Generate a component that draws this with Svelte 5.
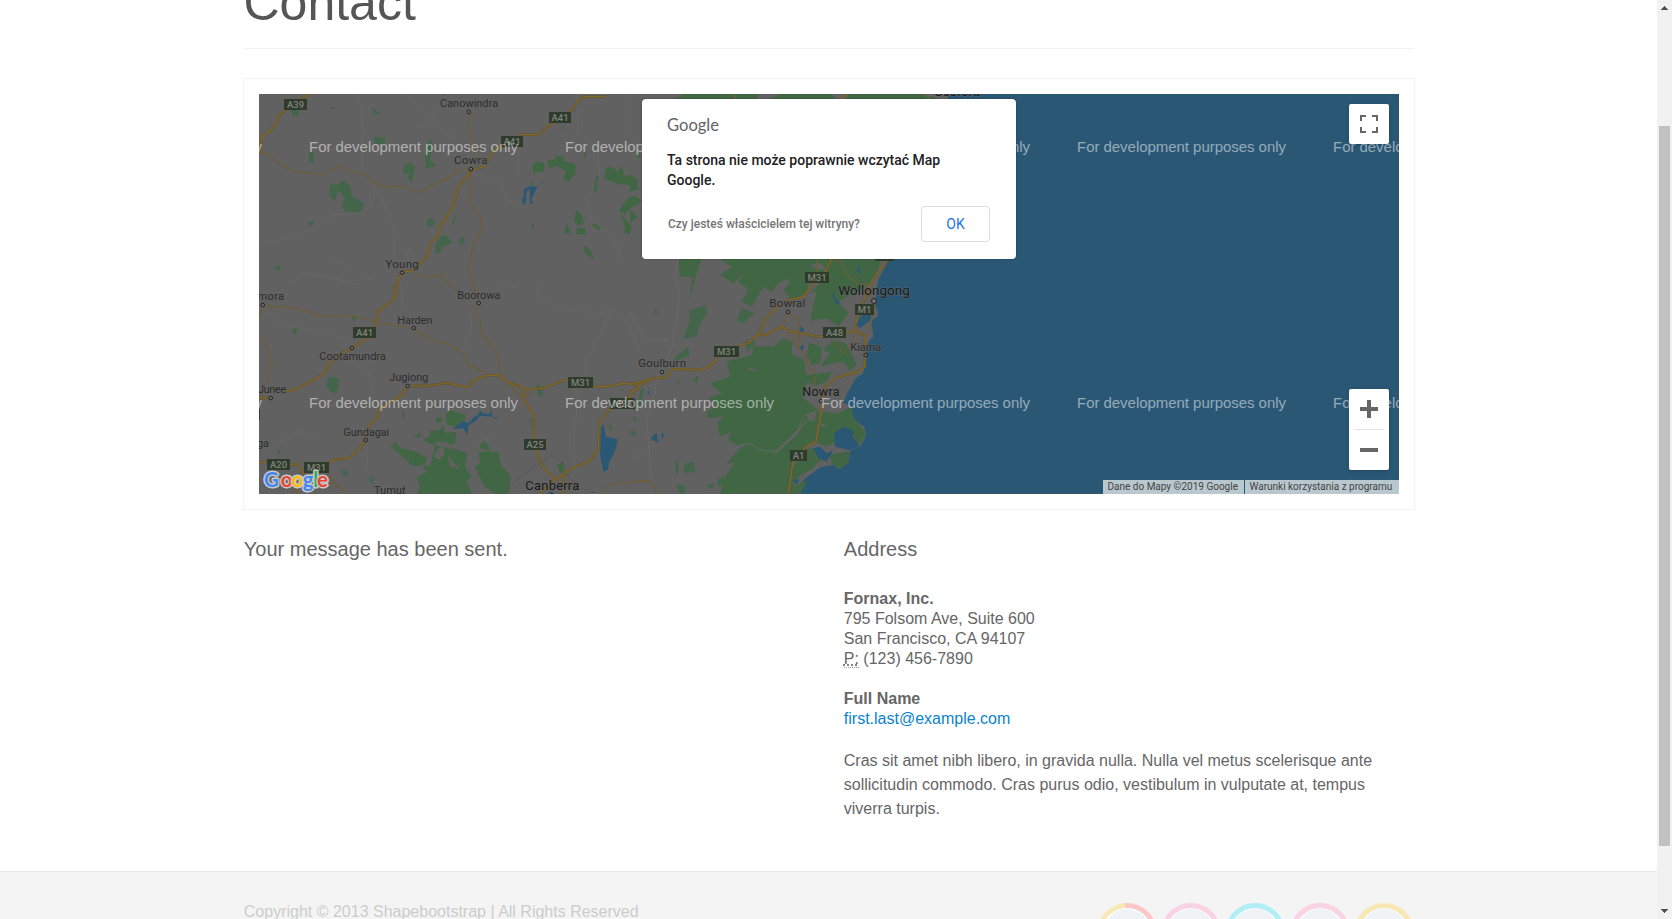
<script>
  // Town labels: text, left x, width, baseline, size, marker x, marker y
  const towns = [
    ['Canowindra', 181, 58, 13, 11, 209.7, 18],
    ['Cowra', 195, 33.5, 70.3, 11.5, 212, 75],
    ['Young', 126.3, 33.5, 174.3, 11.5, 143, 178.7],
    ['Temora', -14, 39, 206.3, 11, 3.7, 211],
    ['Boorowa', 198.3, 43, 205, 11, 219.7, 209],
    ['Harden', 138.3, 35, 230, 11, 154.7, 234],
    ['Cootamundra', 60.3, 66.5, 266, 11, 93, 254],
    ['Jugiong', 130.3, 39, 287.3, 11, 148.7, 292],
    ['Junee', -1, 28, 299, 11, 11.7, 304],
    ['Gundagai', 84.3, 46, 342, 11, 106.7, 346],
    ['Wagga', -23, 33, 353.3, 11, -20, 357],
    ['Tumut', 115, 31.7, 400, 11, 131, 406],
    ['Canberra', 266.3, 54, 395.5, 13, 293.3, 401],
    ['Bowral', 510.3, 36, 213, 11.5, 529, 218],
    ['Wollongong', 579.3, 71.5, 201, 13.5, 615, 207],
    ['Kiama', 591.3, 31, 257, 11, 606.7, 261],
    ['Goulburn', 379.3, 47.7, 273, 11.5, 403, 278],
    ['Nowra', 543.3, 37.3, 302.3, 12.5, 562, 307],
    ['Gosford', 675, 46, 2, 12.5, 700, -20]
  ];

  // Route shields: text, x, y, width
  const shields = [
    ['A39', 25, 5, 23], ['A41', 290, 18, 22], ['A41', 242, 42, 22], ['A41', 94, 233, 23],
    ['M31', 309, 283, 25], ['M23', 351, 304, 25], ['A25', 265, 345, 22], ['A20', 8, 365, 23],
    ['M31', 45, 368, 25], ['A41', -22, 315, 23], ['M31', 546, 178, 24], ['M1', 596, 210, 19],
    ['A48', 564, 233, 23], ['M31', 455, 252, 25], ['A1', 531, 356, 17], ['M1', 616, 156, 19]
  ];

  const marks = [57.5, 313.5].flatMap((y) => [-206, 50, 306, 562, 818, 1074].map((x) => [x, y]));

  const brand = [
    ['G', 5, '#4285f4'], ['o', 21.7, '#ea4335'], ['o', 32.6, '#fbbc05'],
    ['g', 43.8, '#4285f4'], ['l', 54.3, '#34a853'], ['e', 58, '#ea4335']
  ];

  const westRoads =
    'M240 72L215 86L185 105L145 138L138 160L122 180L95 204L90 245L80 262 M1125 80H1060L1035 105L1023 123L965 160L925 194H868 M815 225L790 245L762 290L723 300L710 320L685 350L667 412L628 475L626 495L602 520L590 563L565 586L545 603L516 606L495 655L495 690';
  const westMinor =
    'M90 250H112L140 275L183 302L278 314L330 288L366 308H395L410 320L435 340L478 352L508 348L525 350L545 363L565 368L628 334L650 328L685 300H720 M727 72V87 M716 130V183L731 217V262 M723 300L718 400L749 434L757 478L733 515L716 590L735 665 M555 612L601 622L637 614L641 628L685 665';
  const southRoads =
    'M500 0L494 35L481 53L443 79L439 118L412 158L390 175L365 190L330 208L295 240L281 268L195 314L165 319 M87 339H122 M534 303H595L650 294L713 307L735 284L770 271H805L838 295L870 303L885 314L942 309L1000 286H1014 M1089 305H1130L1178 295L1230 298L1260 286 M534 303L515 330L485 350L451 370L443 398L415 422L408 465L380 500L352 522H315L298 533 M87 535L110 528 M180 540L204 536L220 565L205 600L195 626 M875 310L885 350L915 395L910 460 M918 495L935 542L975 585L1030 547L1080 528L1105 491L1107 415L1135 375L1190 345L1230 298 M975 585L940 615L930 626 M1000 570V626';
  const southMinor =
    'M87 95L103 64L190 68L270 94L368 90L383 98L410 102L443 113L515 125L551 132L615 170L643 171L705 209L712 237L770 268 M730 0L746 54L737 82L751 105V143L799 198L818 280L838 295 M90 148L127 226L110 290L88 335 M298 570L310 592L350 625 M838 295L870 337L905 322 M1120 626L1135 597L1260 588';
  const eastRoads =
    'M0 403L75 384L110 382L125 358L160 357L210 360L237 350L262 325 M325 287L355 279L383 255L408 205L430 180L475 150L520 140L550 100 M585 66L605 27 M0 428L20 420L33 402 M383 255H405L455 231L480 244L555 258L579 260 M648 250L672 242L705 256V350L685 365L620 382L580 415L573 454V490L558 575L527 590L515 605 M490 630L475 731 M775 27L740 73L718 105L700 155L685 190L672 240';
  const eastMinor =
    'M0 700Q65 680 75 715L85 731 M610 27L635 38L650 72L690 105L715 103 M470 190L460 225L487 270L530 325L536 352L550 362L557 410 M470 190L506 210V300 M715 115L735 155L720 240 M672 242V275L640 310L610 275 M560 65V27';
</script>

<div class="screen">
  <div class="page">
    <main class="container">
      <h1>Contact</h1>

      <div class="frame">
        <div class="map">
          <svg class="tiles" width="1140" height="400" viewBox="0 0 1140 400">
            <rect width="1140" height="400" fill="#616161" />

            <!-- Coast and east forests -->
            <g transform="translate(371 156) scale(.33333)">
              <path fill="#2a5774" d="M960 -470L880 -300L800 -90L778 27L760 60L745 90L738 130L735 165L745 188L742 200L724 212L730 262L718 270L709 300L707 345L697 372L680 382L650 432L640 458L665 470L664 505L703 530L707 560L690 590L662 600L655 635L628 658L608 645L570 652L520 690L505 731H2320V-470Z" />
              <path fill="#406643" d="M145 27H215L200 70L178 150L188 80H150Z M270 27H550L530 130L520 140L480 145L445 100L425 125L400 110L365 170L335 155L355 120L325 95L345 65L310 100L270 75L305 50Z M550 27H757L735 75L715 105L670 130L625 155L655 190L625 230L590 205L540 212L525 190V150L580 85Z M430 27H610L585 66L550 66Z" />
              <path fill="#43654a" d="M180 180L230 165V190L210 225L200 260L160 265L178 220Z M335 175L375 190L340 220L320 212Z M70 190L78 173L84 192Z M135 320L175 290L178 315L130 335Z M345 275L375 265V285L350 305Z M140 385L152 395L145 402Z M190 385L208 378L200 405Z M135 637L145 633V668L137 672Z M165 640L190 636L198 665L160 668Z M228 708L250 698L248 718Z M265 685L283 680L280 708H262Z M140 705L165 708V731H150Z" />
              <path fill="#406643" d="M290 335L365 315L372 288L430 290L460 265L487 275L485 312L522 330L530 375L605 365L595 390L555 410L530 395L520 445L565 480L520 520L487 555L430 608L395 605L360 580L325 588L295 570L303 545L270 560L262 520L280 500L230 503L233 480L265 470L235 445L275 430L240 400L300 380Z M270 731L285 680L315 638L290 640L310 615L330 595L355 580L400 608H440L500 555L525 520L570 480L555 570L520 595L490 630L475 731Z" />
              <path fill="#406643" d="M537 278L575 292L570 340L545 345L530 315Z M570 350L600 310L580 300L610 270L650 282L680 345L660 362L640 335L610 340Z M578 485L625 490L665 470L670 500L700 540L706 560L680 588L668 550L640 530L612 550L618 575L590 590L560 578Z M520 600L550 595L585 625L560 640L550 655L505 680L490 710L535 690L510 731H478L490 650Z M600 612L660 605L655 640L628 658L605 640Z" />
              <path fill="#616161" d="M445 100L475 85L480 100L455 125Z M560 125L515 135L520 190L500 215L525 230L540 212Z M570 515L588 525L575 532Z M530 495L558 485L555 515L535 510Z M355 350L390 365L355 360Z M540 45L570 38L590 60L560 58Z" />
              <path fill="#2a5774" d="M690 200L725 180L722 210L690 235L680 225Z M610 120L618 150L632 160L620 165L608 140Z M685 45L692 75L680 60Z M508 228L523 237L518 246L510 244Z M508 292L522 285L519 303Z M62 565L80 548L84 580Z M93 552L102 548L98 570Z M550 595L570 590L590 610L610 600L590 635L565 625Z M612 550L640 530L670 542L668 560L690 590L655 600L615 590Z M490 690L510 688L500 705Z" />
              <path fill="none" stroke="#6b6b6c" stroke-width="2.2" d="M325 588Q360 570 385 598L440 605L500 550L520 500L555 485 M145 27L135 85L148 130L140 200L125 300L80 380L75 430L50 505L65 690 M0 190L50 270H120 M10 630L60 590" />
              <path fill="none" stroke="#444d48" stroke-width="2" stroke-dasharray="4 8" d="M568 634L600 620L665 605" />
            </g>
            <path fill="#406643" d="M415 5L425 0L620 0L662 0L680 5Z M421 165H430L423 180Z M371 84l6 3 3 8-9 3Z M371 115l8 8-8 6Z" />
            <path fill="#616161" d="M500 0l22 0-12 5h-12Z M572 0l18 0-3 5h-10Z" />
            <path fill="none" stroke="#7b632a" stroke-width="1.4" d="M476 0v5M579 5l10-5M668 0l2 5" />

            <!-- North west -->
            <g transform="translate(-29 -24) scale(.33333)">
              <path fill="#43654a" d="M185 120H207L204 137H187Z M430 115L453 132L430 134Z M635 70H650L643 77Z M433 200L465 204L464 225L433 220Z M237 245L252 247L250 280L237 275Z M600 202L607 220L600 270L620 288L588 295L585 255Z M518 295L540 275L556 293L545 338L532 325L540 312H520Z M300 342L322 345L340 330L362 350L364 375L402 402L390 426H345L336 405L345 387L325 360L315 390L298 380Z M233 460L255 450L245 469Z M136 590L154 587L148 602L136 601Z M590 450L606 443L616 455L605 470L590 468Z M665 455L677 430L673 462Z M618 520L637 495L653 500L668 518L655 525L640 527L625 553L615 550Z M684 510L698 500L705 513L694 524Z M993 174L1001 169L1007 178Z" />
              <path fill="#406643" d="M908 285L920 275L945 280L940 305L908 310Z M950 272L975 268L977 257L1000 258V272L1037 283V310L1015 338L1000 325L1008 303L980 288L958 295Z M1065 240L1068 260L1060 263Z M1098 317L1105 320L1100 367L1090 360Z M1127 295L1145 290L1165 308L1170 288L1182 303L1180 320L1198 313L1227 330L1217 345L1165 343L1123 325Z M1198 382L1215 377L1235 390L1225 405L1208 408L1185 433L1165 422Z M1040 420L1055 435L1062 460L1045 467L1032 450Z M1010 460L1022 490L1003 490Z M1040 475L1065 473L1068 492L1038 493Z M1085 465L1095 460L1115 472L1105 480Z M1168 430L1180 440L1205 470L1200 492L1182 488L1185 465Z M1063 525L1080 540L1095 573L1062 545Z M1218 245L1235 255L1222 267Z M898 342L912 337L908 348Z" />
              <path fill="#2a5774" d="M875 385L881 383V358L905 347L908 350L922 348L920 355L912 372L905 385L908 402L900 400V358L890 363L887 398L880 404Z M933 340L938 336V343Z M906 463h4v8h-4Z M303 114l12 -4v3l-10 4Z" />
              <path fill="#616161" d="M889 366L899 362L898 388L890 394Z" />
              <path fill="none" stroke="#686869" stroke-width="2" d="M385 72L400 180L397 295 M520 72L560 100L580 110 M555 175L605 145L620 100 M620 165L690 220 M725 310L810 340L830 390L860 403 M435 345L430 390L405 430L310 435L260 475L180 500L130 517H88 M440 350L490 470L498 600 M1040 72L1045 190L1100 230L1110 320L1070 390L1085 450L1145 500L1180 575 M1200 72V200L1235 240 M870 240V330 M305 572L360 590 M520 580L540 530 M800 655Q830 630 860 655 M170 645L230 612L300 620L345 635L430 625" />
              <path class="minor" d={westMinor} />
              <path class="road" d={westRoads} /><path class="core" d={westRoads} />
            </g>

            <!-- South west -->
            <g transform="translate(-29 191) scale(.33333)">
              <path fill="#43654a" d="M185 135L195 127L204 137L193 150Z M365 93L379 95L373 113Z M299 275L327 280L322 325L303 320L288 300Z M916 305L928 294L930 310L942 330L930 337Z M1233 312L1243 312L1228 370L1218 372Z M1138 412L1149 435L1137 437Z M1197 438L1220 440L1210 453Z M1208 400L1217 395L1216 413Z M333 552L353 560L352 570L337 568Z M418 575L435 577L430 600L420 590Z M285 592H297V614Z" />
              <path fill="#406643" d="M483 483L495 470L513 490L560 500L590 520L583 540L548 543L500 500Z M645 390L660 375L705 390L708 400L680 425L652 420Z M618 400L635 395V413L620 410Z M580 465L602 450L598 435L625 438L640 420L645 445L677 440V475L660 480L650 470H620L615 480L595 475Z M560 577L595 557L575 550L590 540L600 547L615 480L632 483L618 500L612 515L628 525L645 505L640 485L660 490L655 520L660 545L690 552L663 525L655 505L668 490L700 500L712 510L705 545L725 575L710 587L725 626H560L570 605Z M748 485L760 465L781 490L765 495Z M735 545L750 535L745 500L805 500L813 540L843 575L835 626H795L760 600Z M553 455L570 440L572 457Z M982 540L1000 530L1003 560L990 565Z" />
              <path fill="#5b5b5c" d="M895 402L910 400L907 422L897 418Z" />
              <path fill="#2a5774" d="M668 432L700 408L715 415L735 393L745 390L750 375L757 385L780 388L783 372L788 395L750 392L740 405L715 422L712 452L700 430Z M793 396L805 398L795 402Z M519 380h3v22h-3Z M141 505L152 492L146 507Z M1113 425L1120 418L1128 455L1163 463L1155 500L1138 530L1133 555L1120 560L1110 510Z M1250 318h8v12Z M955 620h10v6h-10Z" />
              <path fill="none" stroke="#686869" stroke-width="2" d="M110 80L150 115L365 165 M510 0L525 75 M720 85L725 120L700 195 M360 200L385 245L415 260L425 310L420 345 M920 0L935 45L1010 75L1120 85L1150 65L1190 110L1235 210 M1150 65L1105 160L1065 240L1070 290 M1037 305L1040 390L1030 460L1037 560 M90 535L150 470L210 440L255 445 M410 470L412 550L435 600 M735 480L805 440 M900 570L970 545L1010 590 M910 590L960 550L955 610" />
              <path fill="none" stroke="#474747" stroke-width="3" stroke-dasharray="4 8" d="M810 626L870 575L965 511L1015 545V575L1055 610L1100 626" />
              <path class="minor" d={southMinor} />
              <path class="road" d={southRoads} /><path class="core" d={southRoads} />
            </g>

            <g transform="translate(371 156) scale(.33333)">
              <path class="minor" d={eastMinor} />
              <path class="road" d={eastRoads} /><path class="core" d={eastRoads} />
            </g>

            {#each shields as [name, x, y, w]}
              <rect {x} {y} width={w} height="11" fill="#2f3b2b" />
              <text class="shield" x={x + w / 2} y={y + 9}>{name}</text>
            {/each}

            {#each towns as [name, x, w, y, size, mx, my]}
              <circle cx={mx} cy={my} r={size > 13 ? 2.5 : 1.8} fill="#707070" stroke="#222" stroke-width="1" />
              <text class="town" {x} {y} font-size={size} textLength={w} fill={size > 12 ? '#1a1a1a' : '#2c2c2c'}>{name}</text>
            {/each}

            {#each marks as [x, y]}
              <text class="mark" {x} {y} textLength="209">For development purposes only</text>
            {/each}

            <text class="brand" y="392.7">{#each brand as [letter, x, color]}<tspan {x} fill={color}>{letter}</tspan>{/each}</text>
          </svg>

          <button class="control full" aria-label="Fullscreen">
            <svg width="18" height="18" viewBox="0 0 18 18"><path fill="#666" d="M0 0v6h2V2h4V0H0zm16 0h-4v2h4v4h2V0h-2zm0 16h-4v2h6v-6h-2v4zM2 12H0v6h6v-2H2v-4z" /></svg>
          </button>

          <div class="control zoom">
            <button aria-label="Zoom in"><svg width="18" height="18" viewBox="0 0 18 18"><path fill="#666" d="M18 7h-7V0H7v7H0v4h7v7h4v-7h7z" /></svg></button>
            <span class="rule"></span>
            <button aria-label="Zoom out"><svg width="18" height="18" viewBox="0 0 18 18"><path fill="#666" d="M0 7h18v4H0z" /></svg></button>
          </div>

          <div class="legal">
            <span class="data">Dane do Mapy ©2019 Google</span>
            <span class="terms">Warunki korzystania z programu</span>
          </div>

          <div class="dialog">
            <svg class="wordmark" width="60" height="24"><text x="0" y="16.5" textLength="52" lengthAdjust="spacingAndGlyphs">Google</text></svg>
            <p class="message">Ta strona nie może poprawnie wczytać Map Google.</p>
            <div class="actions">
              <span class="owner">Czy jesteś właścicielem tej witryny?</span>
              <button class="ok">OK</button>
            </div>
          </div>
        </div>
      </div>

      <div class="columns">
        <section><h4>Your message has been sent.</h4></section>
        <section>
          <h4>Address</h4>
          <address>
            <strong>Fornax, Inc.</strong><br />
            795 Folsom Ave, Suite 600<br />
            San Francisco, CA 94107<br />
            <abbr title="Phone">P:</abbr> (123) 456-7890
          </address>
          <address>
            <strong>Full Name</strong><br />
            <a href="#mail">first.last@example.com</a>
          </address>
          <p class="note">Cras sit amet nibh libero, in gravida nulla. Nulla vel metus scelerisque ante sollicitudin commodo. Cras purus odio, vestibulum in vulputate at, tempus viverra turpis.</p>
        </section>
      </div>
    </main>

    <footer>
      <div class="foot">
        <span>Copyright © 2013 Shapebootstrap | All Rights Reserved</span>
        <div class="rings">
          <i class="two"></i><i class="pink"></i><i class="cyan"></i><i class="pink"></i><i class="gold"></i>
        </div>
      </div>
    </footer>
  </div>

  <div class="scrollbar">
    <svg width="15" height="15"><path fill="#505050" d="M4 10h7v-1h-1v-1h-1v-1h-1v-1h-1v1h-1v1h-1v1h-1z" /></svg>
    <div class="thumb"></div>
    <svg width="15" height="15"><path fill="#505050" d="M4 5h7v1h-1v1h-1v1h-1v1h-1v-1h-1v-1h-1v-1h-1z" /></svg>
  </div>
</div>

<style>
  :global(body) { overflow: hidden; background: #fff; }
  .screen { display: flex; width: 1672px; height: 919px; overflow: hidden; font-family: 'Liberation Sans', Arial, sans-serif; font-size: 16px; color: #666; }
  .page { display: flex; flex-direction: column; width: 1657px; height: 919px; overflow: hidden; }
  .container { flex: none; width: 1172px; height: 871px; margin-left: 243px; }
  h1 { display: flex; align-items: flex-end; box-sizing: border-box; height: 49px; margin: 0 1px 29px; padding: 0 0 20px; border-bottom: 1px solid #f3f3f3; font-size: 50px; line-height: 50px; font-weight: 400; color: #555; text-indent: -0.5px; }
  .frame { box-sizing: border-box; height: 432px; padding: 15px; border: 1px solid #f3f3f3; }
  .map { position: relative; height: 400px; overflow: hidden; font-family: Roboto, sans-serif; }
  .tiles { display: block; }
  .minor { fill: none; stroke: #705c36; stroke-width: 3.6; stroke-linejoin: round; }
  .road { fill: none; stroke: #66542c; stroke-width: 7; stroke-linejoin: round; }
  .core { fill: none; stroke: #816a2c; stroke-width: 3.5; stroke-linejoin: round; }
  .shield { font: 500 9.5px Roboto, sans-serif; fill: #7f837d; text-anchor: middle; }
  .town { font-family: Roboto, sans-serif; paint-order: stroke; stroke: #66666699; stroke-width: 1.5px; }
  .mark { font: 15px 'Liberation Sans', sans-serif; fill: #fff; fill-opacity: 0.5; }
  .brand { font: 700 20.5px Lato, sans-serif; paint-order: stroke; stroke: #c9c9c9; stroke-width: 3px; stroke-linejoin: round; }
  button { display: flex; align-items: center; justify-content: center; padding: 0; border: 0; background: none; }
  .control { position: absolute; right: 10px; width: 40px; border-radius: 2px; background: #fff; box-shadow: 0 1px 4px -1px rgba(0, 0, 0, 0.3); }
  .full { top: 10px; height: 40px; }
  .zoom { top: 295px; height: 81px; display: flex; flex-direction: column; align-items: center; }
  .zoom button { width: 40px; height: 40px; }
  .rule { width: 30px; height: 1px; background: #e6e6e6; }
  .legal { position: absolute; right: 0; bottom: 0; display: flex; gap: 1px; font-size: 10px; line-height: 14px; color: #444; white-space: nowrap; }
  .legal span { box-sizing: border-box; height: 14px; padding-left: 4.5px; background: #b9c7ce; }
  .data { width: 141px; }
  .terms { width: 154px; }
  .dialog { position: absolute; left: 383px; top: 5px; box-sizing: border-box; width: 374px; height: 160px; padding: 15px 26px 0 25px; border-radius: 4px; background: #fff; box-shadow: 0 0 2px rgba(0, 0, 0, 0.35); }
  .wordmark { display: block; height: 24px; overflow: visible; }
  .wordmark text { font: 18px Lato, sans-serif; fill: #5f6368; }
  .message { margin: 12px 0 16px; width: 290px; font-size: 14px; line-height: 20px; font-weight: 500; color: #212121; }
  .actions { display: flex; align-items: center; justify-content: space-between; padding-left: 1px; }
  .owner { font-size: 12px; font-weight: 500; color: #757575; }
  .ok { box-sizing: border-box; width: 69px; height: 36px; border: 1px solid #dadce0; border-radius: 4px; background: #fff; color: #1a73e8; font: 14px Roboto, sans-serif; }
  .columns { display: flex; padding-left: 0.8px; }
  .columns section { width: 600px; }
  .columns section:last-child { width: 571px; }
  h4 { margin: 29px 0 30px; font-size: 20px; line-height: 20px; font-weight: 400; }
  address { margin-bottom: 20px; font-style: normal; line-height: 20px; }
  abbr { text-decoration: underline dotted; border-bottom: 1px dotted #999; }
  a { color: #0a83cf; text-decoration: none; }
  .note { width: 540px; margin: 0; line-height: 24px; }
  footer { flex: none; box-sizing: border-box; height: 48px; border-top: 1px solid #e8e8e8; background: #f4f4f4; overflow: hidden; color: #ccc; }
  .foot { display: flex; justify-content: space-between; width: 1170px; padding-left: 243.8px; }
  .foot span { margin-top: 30px; line-height: 20px; }
  .rings { display: flex; gap: 4.3px; margin-top: 31px; }
  .rings i { box-sizing: border-box; width: 60px; height: 60px; border: 5px solid; border-radius: 50%; background: #eff3f6; box-shadow: inset 0 0 0 1px #fbfcfd; }
  .rings .two { border: 0; background: radial-gradient(circle, #eff3f6 24px, #fbfcfd 24px 25px, transparent 25px), linear-gradient(90deg, #f6e9b4 46%, #ffc6c8 46%); box-shadow: none; }
  .rings .pink { border-color: #f9d3e3; }
  .rings .cyan { border-color: #b1eff7; }
  .rings .gold { border-color: #f6e7b3; }
  .scrollbar { display: flex; flex-direction: column; align-items: center; justify-content: space-between; width: 15px; height: 919px; background: #f1f1f1; }
  .thumb { width: 11px; height: 720px; margin: 111px 0 58px; background: #c1c1c1; }
</style>
